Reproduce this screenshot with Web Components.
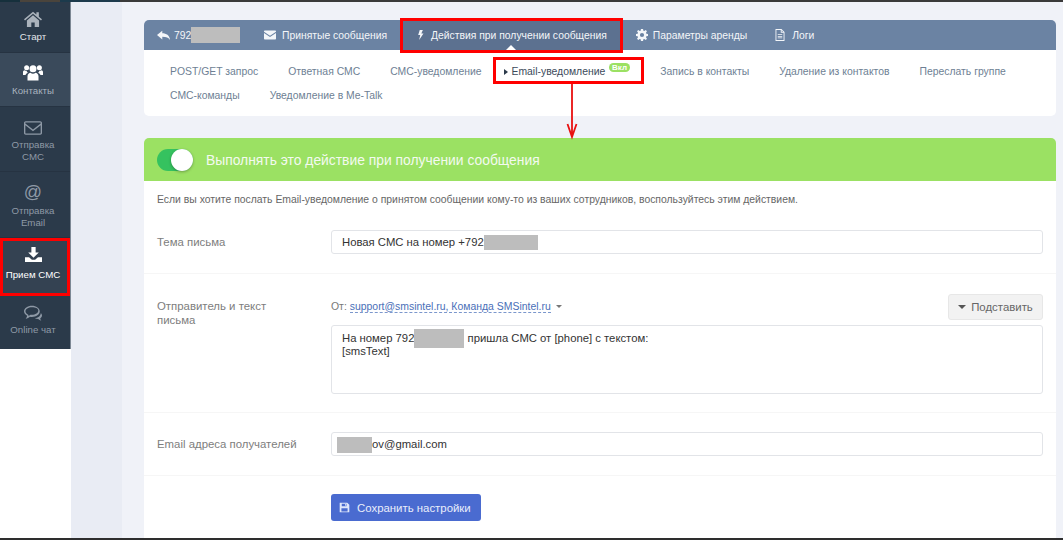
<!DOCTYPE html>
<html lang="ru">
<head>
<meta charset="utf-8">
<title>SMS</title>
<style>
  html, body { margin: 0; height: 100%; overflow: hidden; background: #fff; }
  body { font-family: "Liberation Sans", Arial, sans-serif; font-size: 11px; }
</style>
</head>
<body>
<app-page></app-page>

<template id="page">
  <style>
    :host { display: block; width: 1063px; height: 540px; position: relative; overflow: hidden; font-family: "Liberation Sans", Arial, sans-serif; }
    .top { height: 2px; background: linear-gradient(90deg, #16303c 0 20px, #4a443c 20px 60px, #1c3a4c 60px 120px, #3a3a3a 120px); }
    .bottom { height: 2px; background: #2e2e2e; }
    .wrap { display: flex; height: 536px; }
    .gutter { width: 51px; flex: none; background: #e9ecf4; }
    main { flex: none; width: 941px; box-sizing: border-box; padding: 18px 7px 0 22px; background: #f0f2f8; }
    .sub { white-space: nowrap; }
    .cur { color: #3c4a5a; display: flex; align-items: center; gap: 4px; position: relative; margin-left: -8px; margin-right: 25px; }
    .cur::before { content: ""; border: 3px solid transparent; border-left: 4px solid #2b3a4a; border-right: 0; }
    .badge { position: absolute; left: 105px; top: 3px; height: 9px; line-height: 9px; padding: 0 3.500px; border-radius: 5px; background: #9be163; color: #fff; font-size: 8px; font-weight: bold; }
    .green { margin-top: 22px; height: 43px; display: flex; align-items: center; gap: 13px; padding-left: 13px; background: #9be163; border-radius: 5px 5px 0 0; color: #f3faf0; font-size: 13.870px; }
    .panel { background: #fff; height: 357px; }
    .desc { box-sizing: border-box; padding: 12px 13px 0; color: #666; font-size: 10.400px; line-height: 14px; height: 35px; }
    .r1 { height: 58px; padding-top: 14px; }
    .r2 { height: 139px; padding-top: 20px; }
    .r3 { height: 63px; padding-top: 19px; }
    .lab { line-height: 24px; }
    .lab2 { display: block; padding-top: 5px; }
    .from-line { display: flex; justify-content: space-between; height: 31px; }
    .from { color: #777; font-size: 10.450px; padding-top: 6px; line-height: 13px; }
    .from a { color: #4a6fb8; border-bottom: 1px dashed #7b97cc; text-decoration: none; }
    .from b { display: inline-block; border: 3px solid transparent; border-top: 3px solid #777; border-bottom: 0; margin-left: 2px; vertical-align: 2px; }
    .ins { box-sizing: border-box; width: 95px; height: 26px; display: flex; align-items: center; justify-content: center; gap: 5px; background: #f2f2f2; border: 1px solid #e7e7e7; border-radius: 3px; color: #666; font-size: 11.400px; }
    .ins::before { content: ""; border: 4px solid transparent; border-top: 4px solid #555; border-bottom: 0; }
    .actions { padding: 18px 0 0 187px; }
    .save { display: inline-flex; align-items: center; gap: 7px; box-sizing: border-box; width: 150px; height: 27px; padding-left: 8px; background: #4a6bd0; border-radius: 3px; color: #e9eefb; font-size: 11.400px; }
    .save ui-icon { color: #dfe7fa; }
    .at { font-size: 18px; line-height: 18px; }
    .arrow { position: absolute; left: 563px; top: 83px; width: 18px; height: 56px; overflow: visible; }
  </style>
  <div class="top"></div>
  <div class="wrap">
    <side-bar>
      <side-item lit style="height:51px;padding-top:6px;--gap:2px">
        <ui-icon slot="icon" name="home" size="18"></ui-icon>Старт
      </side-item>
      <side-item active style="height:54px;padding-top:9px;--gap:2px">
        <ui-icon slot="icon" name="users" size="20"></ui-icon>Контакты
      </side-item>
      <side-item style="height:65px;padding-top:10px;--gap:1px">
        <ui-icon slot="icon" name="mail" size="18"></ui-icon>Отправка<br>СМС
      </side-item>
      <side-item style="height:66px;padding-top:9px;--gap:3px">
        <span slot="icon" class="at">@</span>Отправка<br>Email
      </side-item>
      <side-item current style="height:58px;padding-top:6px;--gap:4px">
        <ui-icon slot="icon" name="download" size="17"></ui-icon>Прием СМС
      </side-item>
      <side-item style="height:53px;padding-top:6px;--gap:1px;border-bottom:0">
        <ui-icon slot="icon" name="chat" size="18"></ui-icon>Online чат
      </side-item>
    </side-bar>
    <div class="gutter"></div>
    <main>
      <tab-bar>
        <tab-item style="gap:4px;width:94px;padding-right:0"><ui-icon name="reply" size="13"></ui-icon>792<censor-bar style="width:49px;height:16px;margin-left:-4px"></censor-bar></tab-item>
        <tab-item><ui-icon name="mail-solid" size="12"></ui-icon>Принятые сообщения</tab-item>
        <tab-item active style="padding:0 15px 0 16px;gap:5px"><ui-icon name="bolt" size="10"></ui-icon>Действия при получении сообщения</tab-item>
        <tab-item style="padding-left:14px;gap:5px"><ui-icon name="gear" size="12"></ui-icon>Параметры аренды</tab-item>
        <tab-item style="padding-left:14px"><ui-icon name="doc" size="12"></ui-icon>Логи</tab-item>
      </tab-bar>
      <sub-nav>
        <span class="sub">POST/GET запрос</span>
        <span class="sub">Ответная СМС</span>
        <span class="sub">СМС-уведомление</span>
        <span class="sub cur">Email-уведомление<span class="badge">Вкл</span></span>
        <span class="sub">Запись в контакты</span>
        <span class="sub">Удаление из контактов</span>
        <span class="sub">Переслать группе</span>
        <span class="sub">СМС-команды</span>
        <span class="sub">Уведомление в Me-Talk</span>
      </sub-nav>
      <div class="green"><switch-toggle></switch-toggle>Выполнять это действие при получении сообщения</div>
      <div class="panel">
        <div class="desc">Если вы хотите послать Email-уведомление о принятом сообщении кому-то из ваших сотрудников, воспользуйтесь этим действием.</div>
        <form-row class="r1">
          <span slot="label" class="lab">Тема письма</span>
          <field-box>Новая СМС на номер +792<censor-bar style="width:54px;height:15px"></censor-bar></field-box>
        </form-row>
        <form-row class="r2">
          <span slot="label" class="lab2">Отправитель и текст<br>письма</span>
          <div class="from-line">
            <div class="from">От: <a>support@smsintel.ru, Команда SMSintel.ru</a> <b></b></div>
            <div class="ins">Подставить</div>
          </div>
          <field-box area>На номер 792<censor-bar style="width:50px;height:19px;margin:-4px 0"></censor-bar> пришла СМС от [phone] с текстом:<br>[smsText]</field-box>
        </form-row>
        <form-row class="r3">
          <span slot="label" class="lab">Email адреса получателей</span>
          <field-box><censor-bar style="width:35px;height:16px;margin:2px 0 0 -5px"></censor-bar>ov@gmail.com</field-box>
        </form-row>
        <div class="actions"><div class="save"><ui-icon name="save" size="11"></ui-icon>Сохранить настройки</div></div>
      </div>
    </main>
  </div>
  <div class="bottom"></div>
  <red-box style="left:0;top:238px;width:70px;height:58px"></red-box>
  <red-box style="left:400px;top:18px;width:223px;height:35px"></red-box>
  <red-box style="left:493px;top:57px;width:151px;height:27px"></red-box>
  <svg class="arrow" viewBox="0 0 18 56"><path d="M9 1V54M4.500 41 9 54l4.500-13" fill="none" stroke="#e81010" stroke-width="1.800"/></svg>
</template>

<script>
  // Icon paths, all on a 16x16 box
  const ICONS = {
    home: '<path d="M8 1.500 0 8.300l.9 1L8 3.300l7.100 6 .9-1-2.800-2.400V2h-2.200v2.100zM2.600 9.300V15h3.900v-3.800h3V15h3.900V9.300L8 4.700z"/>',
    users: '<circle cx="8" cy="4.500" r="2.800"/><circle cx="2.900" cy="3.800" r="2"/><circle cx="13.100" cy="3.800" r="2"/><path d="M3.600 14v-3.400c0-1.900 1.400-2.900 2.400-2.900.6.500 1.200.8 2 .8s1.400-.3 2-.8c1 0 2.400 1 2.400 2.900V14zM0 9.500V7.300c0-.9.700-1.500 1.400-1.500.4.300.9.500 1.500.5.200.6.600 1.100 1 1.400-1 .4-1.700 1-1.800 1.800zM16 9.500V7.300c0-.9-.7-1.500-1.400-1.500-.4.300-.9.500-1.500.5-.2.600-.6 1.100-1 1.400 1 .4 1.700 1 1.800 1.800z"/>',
    mail: '<path fill-rule="evenodd" d="M1.500 2h13c.8 0 1.500.7 1.500 1.500v9c0 .8-.7 1.500-1.500 1.500h-13C.7 14 0 13.300 0 12.500v-9C0 2.700.7 2 1.500 2zm0 1.200c-.2 0-.3.100-.3.300v.6L8 9.300l6.800-5.200v-.6c0-.2-.1-.3-.3-.3zm13.300 2.400L8 10.800 1.200 5.600v6.900c0 .2.100.3.300.3h13c.2 0 .3-.1.300-.3z"/>',
    'mail-solid': '<path d="M1 2h14c.6 0 1 .4 1 1v.8L8 9 0 3.800V3c0-.6.4-1 1-1zM0 5.400V13c0 .6.4 1 1 1h14c.6 0 1-.4 1-1V5.400L8 10.600z"/>',
    download: '<path d="M6 1h4v5h3L8 11 3 6h3zM0 10.500h3.800L6.500 13h3l2.700-2.500H16V15H0zM12 12.300h1v1h-1zm2 0h1v1h-1z"/>',
    chat: '<path fill-rule="evenodd" d="M7 1.500c3.900 0 7 2.200 7 5s-3.100 5-7 5c-.6 0-1.200 0-1.800-.2C4.200 12.200 3 12.800 1.500 13c.7-.8 1.200-1.600 1.300-2.500C1.100 9.500 0 8.100 0 6.500c0-2.800 3.100-5 7-5zm0 1.300c-3.200 0-5.700 1.700-5.700 3.700 0 1.200.9 2.400 2.700 3.200l-.1 1c.6-.3 1.200-.7 1.800-1.200.4.100.9.100 1.300.1 3.200 0 5.700-1.700 5.700-3.800S10.200 2.800 7 2.800z"/><path d="M15 8c.7.700 1 1.400 1 2.200 0 1-.6 1.900-1.600 2.600.1.800.5 1.500 1 2-1.100-.2-2-.7-2.800-1.400-1.100 0-2.100-.2-2.900-.7 2.600-.2 5.100-2 5.300-4.700z"/>',
    reply: '<path d="M6.500 2v3.200C11.500 5.300 15.500 7.500 16 13.500c-1.500-3-4.500-4-9.500-4V13L0 7.500z"/>',
    bolt: '<path d="M6 0h5L8.500 5.500H12L5 16l1.800-8H3.500z"/>',
    gear: '<path fill-rule="evenodd" d="M6.600 0h2.800l.4 2.200 1.300.5L13 1.400l1.600 1.600-1.300 1.900.5 1.300 2.200.4v2.800l-2.200.4-.5 1.300 1.300 1.900-1.600 1.600-1.900-1.300-1.300.5-.4 2.200H6.600l-.4-2.200-1.300-.5L3 14.600 1.400 13l1.300-1.900-.5-1.300L0 9.400V6.600l2.200-.4.500-1.300L1.400 3 3 1.400l1.900 1.300 1.300-.5zM8 5.200a2.800 2.800 0 1 0 0 5.600 2.800 2.800 0 0 0 0-5.600z"/>',
    doc: '<path fill-rule="evenodd" d="M2 0h8l4 4v12H2zm1.200 1.200v13.600h9.600V5H9V1.200zm7 .6V3.800h2zM5 7h6v1H5zm0 2.200h6v1H5zm0 2.200h6v1H5z"/>',
    save: '<path fill-rule="evenodd" d="M1.500 1H12l3 3v10.500c0 .3-.2.500-.5.500h-13c-.3 0-.5-.2-.5-.5v-13c0-.3.200-.5.500-.5zM4 2.500V6h7V2.500zm5 .5h1.300v2.400H9zM3.500 9v4.700h9V9z"/>'
  };

  class UiIcon extends HTMLElement {
    connectedCallback() {
      const size = this.getAttribute('size') || '14';
      const shadow = this.shadowRoot || this.attachShadow({mode: 'open'});
      shadow.innerHTML = `
        <style>
          :host { display: inline-block; width: ${size}px; height: ${size}px; flex: none; line-height: 0; }
          svg { display: block; width: 100%; height: 100%; fill: currentcolor; }
        </style>
        <svg viewBox="0 0 16 16">${ICONS[this.getAttribute('name')]}</svg>
      `;
    }
  }
  customElements.define('ui-icon', UiIcon);

  class SideItem extends HTMLElement {
    constructor() {
      super();
      const shadow = this.attachShadow({mode: 'open'});
      shadow.innerHTML = `
        <style>
          :host {
            display: flex; flex-direction: column; align-items: center; box-sizing: border-box;
            padding-right: 4px; color: #8e99a6; font-size: 9.700px; line-height: 12px; text-align: center;
            border-bottom: 1px solid #263342; position: relative;
          }
          :host([active]) { background: #3a4a5b; color: #a9b3bf; }
          :host([current]) { background: #344252; color: #fff; }
          :host([lit]) { color: #e3e6ea; }
          .ic { height: 21px; display: flex; align-items: center; color: #8e99a6; }
          :host([active]) .ic, :host([current]) .ic { color: #fff; }
          :host([lit]) .ic { color: #aab2bb; }
          .t { margin-top: var(--gap, 4px); }
        </style>
        <div class="ic"><slot name="icon"></slot></div>
        <div class="t"><slot></slot></div>
      `;
    }
  }
  customElements.define('side-item', SideItem);

  class SideBar extends HTMLElement {
    constructor() {
      super();
      this.attachShadow({mode: 'open'}).innerHTML = `
        <style>
          :host { display: block; width: 70px; height: 347px; background: #2b3a4a; border-right: 1px solid #7d8894; flex: none; }
        </style>
        <slot></slot>
      `;
    }
  }
  customElements.define('side-bar', SideBar);

  class TabBar extends HTMLElement {
    constructor() {
      super();
      this.attachShadow({mode: 'open'}).innerHTML = `
        <style>
          :host {
            display: flex; height: 30px; background: #6b83a3; border-radius: 5px 5px 0 0;
            color: #fff; font-size: 10.350px;
          }
        </style>
        <slot></slot>
      `;
    }
  }
  customElements.define('tab-bar', TabBar);

  class TabItem extends HTMLElement {
    constructor() {
      super();
      this.attachShadow({mode: 'open'}).innerHTML = `
        <style>
          :host { display: flex; align-items: center; gap: 6px; padding: 0 13px; white-space: nowrap; position: relative; color: #f4f6f9; }
          :host([active]) { background: #5c7190; }
          :host([active])::after {
            content: ""; position: absolute; left: 50%; bottom: 0; margin-left: -5px;
            border: 5px solid transparent; border-top: 0; border-bottom-color: #fff;
          }
        </style>
        <slot></slot>
      `;
    }
  }
  customElements.define('tab-item', TabItem);

  class SubNav extends HTMLElement {
    constructor() {
      super();
      this.attachShadow({mode: 'open'}).innerHTML = `
        <style>
          :host {
            display: flex; flex-wrap: wrap; align-content: flex-start; column-gap: 30px; box-sizing: border-box;
            height: 66px; padding: 10px 26px 0; background: #fff; border-radius: 0 0 5px 5px;
            color: #6e7f94; font-size: 10.400px; line-height: 24px;
          }
        </style>
        <slot></slot>
      `;
    }
  }
  customElements.define('sub-nav', SubNav);

  class FormRow extends HTMLElement {
    constructor() {
      super();
      this.attachShadow({mode: 'open'}).innerHTML = `
        <style>
          :host { display: grid; grid-template-columns: 174px 712px; padding: 0 13px; border-bottom: 1px solid #f6f6f6; box-sizing: border-box; }
          .l { color: #7d7d7d; font-size: 11.400px; line-height: 14px; white-space: nowrap; }
        </style>
        <div class="l"><slot name="label"></slot></div>
        <div><slot></slot></div>
      `;
    }
  }
  customElements.define('form-row', FormRow);

  class FieldBox extends HTMLElement {
    constructor() {
      super();
      this.attachShadow({mode: 'open'}).innerHTML = `
        <style>
          :host {
            display: flex; align-items: center; box-sizing: border-box; height: 24px; padding: 0 10px;
            border: 1px solid #e2e4e8; border-radius: 3px; background: #fff; color: #333; font-size: 11.300px;
            white-space: nowrap;
          }
          :host([area]) { display: block; height: 69px; padding: 5.500px 10px; line-height: 13px; }
        </style>
        <slot></slot>
      `;
    }
  }
  customElements.define('field-box', FieldBox);

  class CensorBar extends HTMLElement {
    constructor() {
      super();
      this.attachShadow({mode: 'open'}).innerHTML = `
        <style>
          :host { display: inline-block; background: #bdbdbd; vertical-align: middle; }
        </style>
      `;
    }
  }
  customElements.define('censor-bar', CensorBar);

  class SwitchToggle extends HTMLElement {
    constructor() {
      super();
      this.attachShadow({mode: 'open'}).innerHTML = `
        <style>
          :host { display: block; width: 36px; height: 22px; border-radius: 11px; background: #35c25f; position: relative; flex: none; }
          i { position: absolute; right: 0; top: 0; width: 22px; height: 22px; border-radius: 50%; background: #fff; box-shadow: 0 1px 3px rgba(0,0,0,.3); }
        </style>
        <i></i>
      `;
    }
  }
  customElements.define('switch-toggle', SwitchToggle);

  class RedBox extends HTMLElement {
    constructor() {
      super();
      this.attachShadow({mode: 'open'}).innerHTML = `
        <style>
          :host { display: block; position: absolute; box-sizing: border-box; border: 3px solid #f00; pointer-events: none; }
        </style>
      `;
    }
  }
  customElements.define('red-box', RedBox);

  class AppPage extends HTMLElement {
    constructor() {
      super();
      const shadow = this.attachShadow({mode: 'open'});
      shadow.appendChild(document.getElementById('page').content.cloneNode(true));
    }
  }
  customElements.define('app-page', AppPage);
</script>
</body>
</html>
